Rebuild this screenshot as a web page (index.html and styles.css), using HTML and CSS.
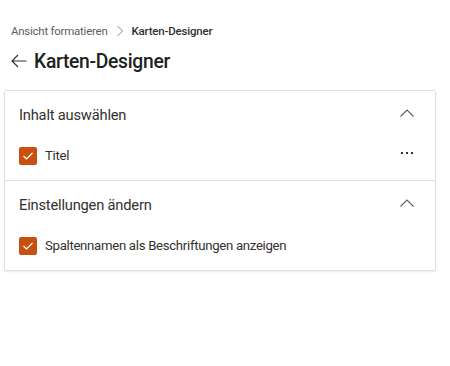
FILE: index.html
```html
<!DOCTYPE html>
<html lang="de">
<head>
<meta charset="utf-8">
<link rel="stylesheet" href="styles.css">
</head>
<body>
<div class="page">
  <nav class="crumbs">
    <span class="crumb">Ansicht formatieren</span>
    <svg class="crumb-sep" width="8" height="12" viewBox="0 0 8 12"><path d="M1.5 1 L6.5 6 L1.5 11" fill="none" stroke="#8a8886" stroke-width="1"/></svg>
    <span class="crumb current">Karten-Designer</span>
  </nav>
  <header class="title-row">
    <svg class="back" width="16" height="14" viewBox="0 0 16 14"><path d="M7 1 L1 7 L7 13 M1 7 H15.5" fill="none" stroke="#323130" stroke-width="1.2"/></svg>
    <h1 class="title">Karten-Designer</h1>
  </header>
  <section class="card">
    <div class="group">
      <div class="group-head">
        <span class="group-title">Inhalt auswählen</span>
        <svg class="chev" width="16" height="10" viewBox="0 0 16 10"><path d="M1.5 8.5 L8 2 L14.5 8.5" fill="none" stroke="#605e5c" stroke-width="1.1"/></svg>
      </div>
      <div class="row">
        <span class="check"><svg width="12" height="10" viewBox="0 0 12 10"><path d="M1.5 5 L4.5 8 L10.5 2" fill="none" stroke="#fff" stroke-width="1.2"/></svg></span>
        <span class="label">Titel</span>
        <span class="more"><i></i><i></i><i></i></span>
      </div>
    </div>
    <div class="group">
      <div class="group-head">
        <span class="group-title">Einstellungen ändern</span>
        <svg class="chev" width="16" height="10" viewBox="0 0 16 10"><path d="M1.5 8.5 L8 2 L14.5 8.5" fill="none" stroke="#605e5c" stroke-width="1.1"/></svg>
      </div>
      <div class="row">
        <span class="check"><svg width="12" height="10" viewBox="0 0 12 10"><path d="M1.5 5 L4.5 8 L10.5 2" fill="none" stroke="#fff" stroke-width="1.2"/></svg></span>
        <span class="label">Spaltennamen als Beschriftungen anzeigen</span>
      </div>
    </div>
  </section>
</div>
</body>
</html>
```
FILE: styles.css
```css
* { box-sizing: border-box; }
html, body { margin: 0; padding: 0; background: #fff; }
body {
  font-family: Roboto, "Open Sans", "Liberation Sans", sans-serif;
  color: #323130;
}
.page {
  width: 450px;
  height: 366px;
  padding: 22px 14px 0 4px;
}
.crumbs {
  display: flex;
  align-items: center;
  gap: 8px;
  height: 18px;
  padding-left: 7px;
}
.crumb {
  font-size: 11.5px;
  letter-spacing: -0.25px;
  color: #605e5c;
}
.crumb.current {
  letter-spacing: -0.2px;
  color: #323130;
  font-weight: 500;
}
.title-row {
  display: flex;
  align-items: center;
  gap: 7px;
  margin-top: 8px;
  height: 26px;
  padding-left: 7px;
}
.title {
  margin: 0;
  font-size: 19.3px;
  letter-spacing: -0.3px;
  font-weight: 500;
  color: #201f1e;
}
.card {
  margin-top: 16px;
  border: 1px solid #e1dfdd;
  border-radius: 2px;
  box-shadow: 0 1px 2px rgba(0,0,0,0.08);
}
.group + .group { border-top: 1px solid #e1dfdd; }
.group { padding: 0 14px 0 14px; }
.group-head {
  display: flex;
  align-items: center;
  justify-content: space-between;
  height: 46px;
  padding-top: 2px;
}
.group-title {
  font-size: 14.7px;
  letter-spacing: -0.2px;
  color: #323130;
}
.chev { margin-right: 6px; margin-top: -4px; }
.row {
  display: flex;
  align-items: center;
  height: 43px;
  padding-bottom: 6px;
}
.check {
  width: 18px;
  height: 18px;
  border-radius: 2px;
  background: #ca5010;
  display: flex;
  align-items: center;
  justify-content: center;
  margin-right: 8px;
}
.label {
  font-size: 13.2px;
  letter-spacing: -0.3px;
  color: #323130;
}
.more {
  margin-left: auto;
  margin-right: 8px;
  display: flex;
  gap: 3px;
  margin-top: -6px;
}
.more i {
  width: 2px;
  height: 2px;
  background: #323130;
  display: block;
}
```
